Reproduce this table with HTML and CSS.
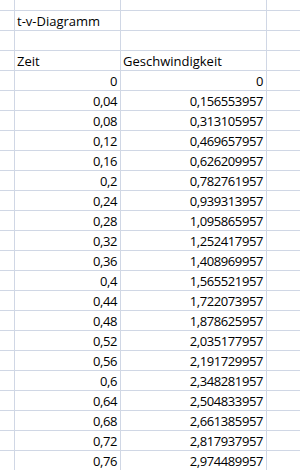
FILE: index.html
```html
<!DOCTYPE html>
<html lang="de">
<head>
<meta charset="utf-8">
<title>t-v-Diagramm</title>
<link rel="stylesheet" href="styles.css">
</head>
<body>
<div class="sheet">
  <div class="row top"><div class="c"></div><div class="c"></div><div class="c"></div><div class="c last"></div></div>
  <div class="row"><div class="c"></div><div class="c txt">t-v-Diagramm</div><div class="c"></div><div class="c last"></div></div>
  <div class="row"><div class="c"></div><div class="c"></div><div class="c"></div><div class="c last"></div></div>
  <div class="row"><div class="c"></div><div class="c txt">Zeit</div><div class="c txt">Geschwindigkeit</div><div class="c last"></div></div>
  <div class="row"><div class="c"></div><div class="c num">0</div><div class="c num">0</div><div class="c last"></div></div>
  <div class="row"><div class="c"></div><div class="c num">0,04</div><div class="c num">0,156553957</div><div class="c last"></div></div>
  <div class="row"><div class="c"></div><div class="c num">0,08</div><div class="c num">0,313105957</div><div class="c last"></div></div>
  <div class="row"><div class="c"></div><div class="c num">0,12</div><div class="c num">0,469657957</div><div class="c last"></div></div>
  <div class="row"><div class="c"></div><div class="c num">0,16</div><div class="c num">0,626209957</div><div class="c last"></div></div>
  <div class="row"><div class="c"></div><div class="c num">0,2</div><div class="c num">0,782761957</div><div class="c last"></div></div>
  <div class="row"><div class="c"></div><div class="c num">0,24</div><div class="c num">0,939313957</div><div class="c last"></div></div>
  <div class="row"><div class="c"></div><div class="c num">0,28</div><div class="c num">1,095865957</div><div class="c last"></div></div>
  <div class="row"><div class="c"></div><div class="c num">0,32</div><div class="c num">1,252417957</div><div class="c last"></div></div>
  <div class="row"><div class="c"></div><div class="c num">0,36</div><div class="c num">1,408969957</div><div class="c last"></div></div>
  <div class="row"><div class="c"></div><div class="c num">0,4</div><div class="c num">1,565521957</div><div class="c last"></div></div>
  <div class="row"><div class="c"></div><div class="c num">0,44</div><div class="c num">1,722073957</div><div class="c last"></div></div>
  <div class="row"><div class="c"></div><div class="c num">0,48</div><div class="c num">1,878625957</div><div class="c last"></div></div>
  <div class="row"><div class="c"></div><div class="c num">0,52</div><div class="c num">2,035177957</div><div class="c last"></div></div>
  <div class="row"><div class="c"></div><div class="c num">0,56</div><div class="c num">2,191729957</div><div class="c last"></div></div>
  <div class="row"><div class="c"></div><div class="c num">0,6</div><div class="c num">2,348281957</div><div class="c last"></div></div>
  <div class="row"><div class="c"></div><div class="c num">0,64</div><div class="c num">2,504833957</div><div class="c last"></div></div>
  <div class="row"><div class="c"></div><div class="c num">0,68</div><div class="c num">2,661385957</div><div class="c last"></div></div>
  <div class="row"><div class="c"></div><div class="c num">0,72</div><div class="c num">2,817937957</div><div class="c last"></div></div>
  <div class="row"><div class="c"></div><div class="c num">0,76</div><div class="c num">2,974489957</div><div class="c last"></div></div>
</div>
</body>
</html>
```
FILE: styles.css
```css
html, body {
  margin: 0;
  padding: 0;
  background: #ffffff;
}
body {
  font-family: "Open Sans", "Liberation Sans", sans-serif;
  font-size: 13px;
  color: #000000;
  overflow: hidden;
}
.sheet {
  width: 300px;
  display: flex;
  flex-direction: column;
}
.row {
  display: grid;
  grid-template-columns: 15px 106px 146px 1fr;
  height: 20px;
}
.row.top {
  height: 11px;
}
.c {
  box-sizing: border-box;
  border-right: 1px solid #d0d7e5;
  border-bottom: 1px solid #d0d7e5;
  display: flex;
  align-items: flex-end;
  line-height: 16px;
  padding: 0 2px 1px 2px;
  white-space: nowrap;
  overflow: visible;
}
.c.last {
  border-right: none;
}
.txt {
  justify-content: flex-start;
}
.num {
  justify-content: flex-end;
  letter-spacing: -0.4px;
  padding-right: 3px;
}
```
